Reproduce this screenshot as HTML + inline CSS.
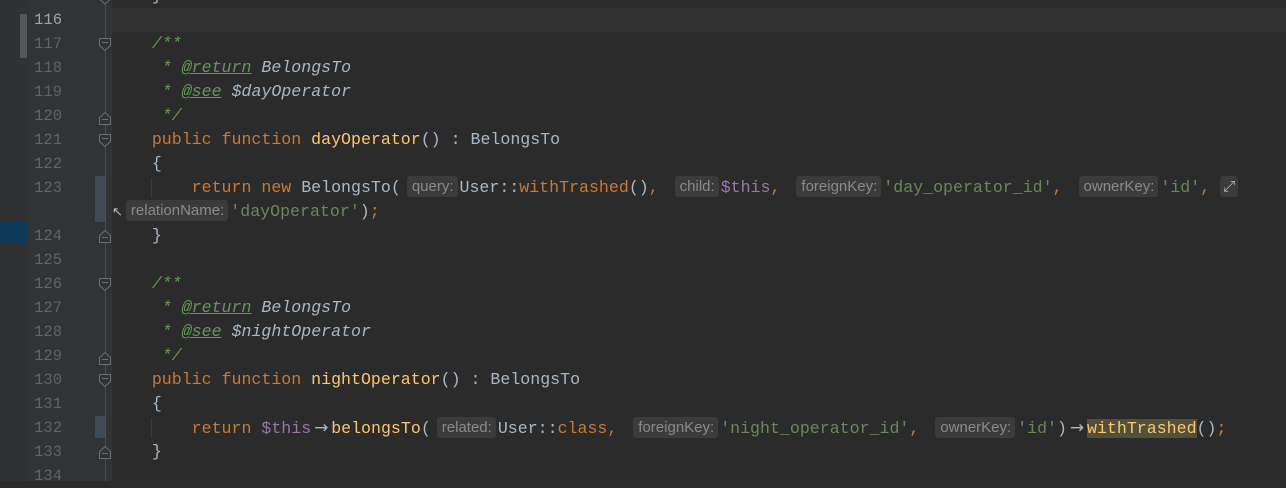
<!DOCTYPE html>
<html><head><meta charset="utf-8"><style>
html,body{margin:0;padding:0;}
body{width:1286px;height:481px;overflow:hidden;background:#2b2b2b;position:relative;font-family:"Liberation Mono",monospace;font-size:16.6px;}
.g{position:absolute;left:0;top:0;width:112px;height:481px;background:#313335;}
.g0{position:absolute;left:0;top:0;width:28px;height:481px;background:#2f3133;}
.ln{position:absolute;left:30px;width:32px;text-align:right;color:#606366;font-size:15.5px;line-height:24px;height:24px;}
.row{position:absolute;left:112px;height:24px;line-height:24px;white-space:pre;color:#a9b7c6;}
.cur{position:absolute;left:112px;top:8px;width:1174px;height:24px;background:#323232;}
.k{color:#cc7832}.c{color:#629755;font-style:italic}.t{color:#629755;text-decoration:underline;font-style:italic}
.ci{color:#a9b7c6;font-style:italic}.f{color:#ffc66d}.s{color:#6a8759}.v{color:#9876aa}
.h{display:inline-block;font-family:"Liberation Sans",sans-serif;font-size:15px;color:#8a8a8a;background:#3b3b3b;border-radius:3px;padding:0 4px 0 5px;line-height:21px;margin:0 2px 0 6px;vertical-align:1px;}
.hl{background:#52503a;color:#ffc66d}
.ar{display:inline-block;width:20px;text-align:center;font-family:"DejaVu Sans",sans-serif;font-size:17px;}
</style></head><body>
<div class="g"><div class="g0"></div></div>
<div style="position:absolute;left:20px;top:14px;width:7px;height:44px;background:#55585a"></div>
<div style="position:absolute;left:0;top:221px;width:28px;height:22px;background:#0d3a58"></div>
<div style="position:absolute;left:105px;top:0;width:1px;height:481px;background:#4b4d4f"></div>
<div style="position:absolute;left:95px;top:176px;width:10px;height:46px;background:#3d4b56"></div>
<div style="position:absolute;left:95px;top:416px;width:10px;height:22px;background:#3d4b56"></div>
<div class="cur"></div>

<div class="ln" style="top:8px;color:#a4a3a3">116</div>
<div class="ln" style="top:32px">117</div>
<div class="ln" style="top:56px">118</div>
<div class="ln" style="top:80px">119</div>
<div class="ln" style="top:104px">120</div>
<div class="ln" style="top:128px">121</div>
<div class="ln" style="top:152px">122</div>
<div class="ln" style="top:176px">123</div>
<div class="ln" style="top:224px">124</div>
<div class="ln" style="top:248px">125</div>
<div class="ln" style="top:272px">126</div>
<div class="ln" style="top:296px">127</div>
<div class="ln" style="top:320px">128</div>
<div class="ln" style="top:344px">129</div>
<div class="ln" style="top:368px">130</div>
<div class="ln" style="top:392px">131</div>
<div class="ln" style="top:416px">132</div>
<div class="ln" style="top:440px">133</div>
<div class="ln" style="top:464px">134</div>

<svg style="position:absolute;left:0;top:0" width="112" height="481">
<g fill="#313335" stroke="#6b6d70" stroke-width="1">
<path d="M99.5 -8 h11 v7 l-5.5 5 l-5.5 -5z"/>
<path d="M99.5 38.5 h11 v7 l-5.5 5 l-5.5 -5z"/><path d="M102 42.5h6"/>
<path d="M99.5 124.5 v-7 l5.5 -5 l5.5 5 v7z"/><path d="M102 119.5h6"/>
<path d="M99.5 134.5 h11 v7 l-5.5 5 l-5.5 -5z"/><path d="M102 138.5h6"/>
<path d="M99.5 242.5 v-7 l5.5 -5 l5.5 5 v7z"/><path d="M102 237.5h6"/>
<path d="M99.5 278.5 h11 v7 l-5.5 5 l-5.5 -5z"/><path d="M102 282.5h6"/>
<path d="M99.5 364.5 v-7 l5.5 -5 l5.5 5 v7z"/><path d="M102 359.5h6"/>
<path d="M99.5 374.5 h11 v7 l-5.5 5 l-5.5 -5z"/><path d="M102 378.5h6"/>
<path d="M99.5 458.5 v-7 l5.5 -5 l5.5 5 v7z"/><path d="M102 453.5h6"/>
</g></svg>
<div style="position:absolute;left:151px;top:178px;width:1px;height:20px;background:#3c3c3c"></div>
<div style="position:absolute;left:151px;top:418px;width:1px;height:20px;background:#3c3c3c"></div>

<div class="row" style="top:-16px">    }</div>
<div class="row" style="top:32px"><span class="c">    /**</span></div>
<div class="row" style="top:56px"><span class="c">     * <span class="t">@return</span> </span><span class="ci">BelongsTo</span></div>
<div class="row" style="top:80px"><span class="c">     * <span class="t">@see</span> </span><span class="ci">$dayOperator</span></div>
<div class="row" style="top:104px"><span class="c">     */</span></div>
<div class="row" style="top:128px">    <span class="k">public function </span><span class="f">dayOperator</span>() : BelongsTo</div>
<div class="row" style="top:152px">    {</div>
<div class="row" style="top:176px">        <span class="k">return new </span>BelongsTo(<span class="h">query:</span>User::<span class="k">withTrashed</span>()<span class="k">, </span><span class="h">child:</span><span class="v">$this</span><span class="k">, </span><span class="h">foreignKey:</span><span class="s">'day_operator_id'</span><span class="k">, </span><span class="h">ownerKey:</span><span class="s">'id'</span><span class="k">, </span><span class="h" style="margin-left:0;padding:0 3px;color:#bbb">⤢</span></div>
<div class="row" style="top:200px"><span style="color:#bbb;font-size:13px">↖</span><span class="h" style="margin-left:3px">relationName:</span><span class="s">'dayOperator'</span>)<span class="k">;</span></div>
<div class="row" style="top:224px">    }</div>
<div class="row" style="top:272px"><span class="c">    /**</span></div>
<div class="row" style="top:296px"><span class="c">     * <span class="t">@return</span> </span><span class="ci">BelongsTo</span></div>
<div class="row" style="top:320px"><span class="c">     * <span class="t">@see</span> </span><span class="ci">$nightOperator</span></div>
<div class="row" style="top:344px"><span class="c">     */</span></div>
<div class="row" style="top:368px">    <span class="k">public function </span><span class="f">nightOperator</span>() : BelongsTo</div>
<div class="row" style="top:392px">    {</div>
<div class="row" style="top:416px">        <span class="k">return </span><span class="v">$this</span><span class="ar">→</span><span class="f">belongsTo</span>(<span class="h">related:</span>User::<span class="k">class</span><span class="k">, </span><span class="h">foreignKey:</span><span class="s">'night_operator_id'</span><span class="k">, </span><span class="h">ownerKey:</span><span class="s">'id'</span>)<span class="ar">→</span><span class="hl">withTrashed</span>()<span class="k">;</span></div>
<div class="row" style="top:440px">    }</div>
</body></html>
